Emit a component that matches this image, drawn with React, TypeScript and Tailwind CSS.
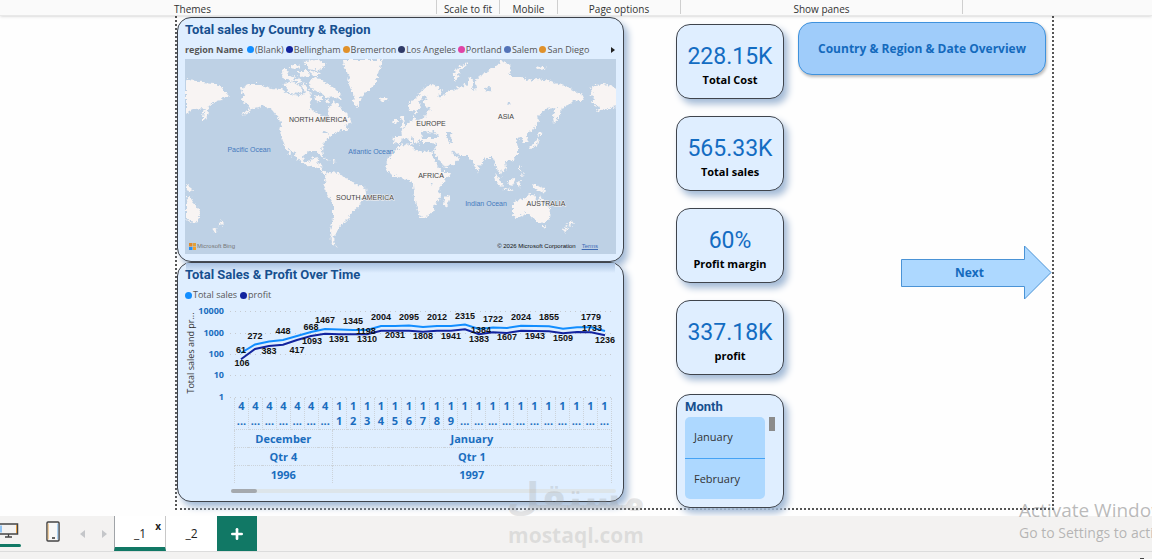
import { LuPlus } from "react-icons/lu";

const regions = [
  { name: "(Blank)", color: "#118dff" },
  { name: "Bellingham", color: "#12239e" },
  { name: "Bremerton", color: "#e0912b" },
  { name: "Los Angeles", color: "#2f3a68" },
  { name: "Portland", color: "#e044a7" },
  { name: "Salem", color: "#5373b8" },
  { name: "San Diego", color: "#e0912b" },
];

const kpis = [
  { value: "228.15K", label: "Total Cost" },
  { value: "565.33K", label: "Total sales" },
  { value: "60%", label: "Profit margin" },
  { value: "337.18K", label: "profit" },
];

const ticks = [
  { label: "10000", y: 311 },
  { label: "1000", y: 333 },
  { label: "100", y: 354 },
  { label: "10", y: 375 },
  { label: "1", y: 397 },
];

const salesLine = [
  353, 344.5, 341.5, 340, 336, 332, 329, 329.5, 330, 330, 326, 326, 325.5, 327,
  326, 326, 324.5, 329, 327.5, 328, 325.7, 326, 326.3, 328.7, 327.3, 327.3, 331,
];

const profitLine = [
  359.3, 349, 346, 344.7, 340, 336, 333.7, 334.3, 334.3, 334.3, 330.7, 330.7,
  330.7, 331.7, 330.7, 330.7, 329.3, 334.3, 332.3, 333, 330.7, 331, 331.3,
  333.3, 332, 332.3, 335.3,
];

// text, x, y (center)
const labels: [string, number, number][] = [
  ["61", 241, 350],
  ["106", 242, 363],
  ["272", 255, 336],
  ["383", 269, 351],
  ["448", 283, 331],
  ["417", 297, 350],
  ["668", 311, 327],
  ["1093", 312, 341],
  ["1467", 325, 320],
  ["1391", 339, 339],
  ["1345", 353, 321],
  ["1198", 366, 331],
  ["1310", 367, 339],
  ["2004", 381, 317],
  ["2031", 395, 335],
  ["2095", 409, 317],
  ["1808", 423, 336],
  ["2012", 437, 317],
  ["1941", 451, 336],
  ["2315", 465, 316],
  ["1384", 481, 330],
  ["1383", 479, 339],
  ["1722", 493, 319],
  ["1607", 507, 337],
  ["2024", 521, 317],
  ["1943", 535, 336],
  ["1855", 549, 317],
  ["1509", 563, 338],
  ["1779", 591, 317],
  ["1733", 592, 328],
  ["1236", 605, 340],
];

const days = Array.from({ length: 27 }, (_, i) => ({
  top: i < 7 ? "4" : "1",
  bottom: i >= 7 && i < 16 ? String(i - 6) : "...",
}));

const toPoints = (line: number[]) =>
  line.map((y, i) => `${241 + i * 14},${y}`).join(" ");

const land = [
  // north america
  "M240 87L248 83 257 83 270 87 280 88 285 92 297 95 303 92 310 97 308 107 317 113 323 115 325 120 328 115 327 108 333 100 340 107 347 114 350 121 344 125 347 129 339 129 333 132 325 138 322 145 321 150 323 157 319 153 316 151 307 151 302 155 304 161 308 161 312 157 318 156 316 162 320 164 321 170 329 172 323 173 317 167 308 165 299 160 292 151 287 147 291 157 285 149 281 140 279 130 281 121 275 114 270 108 262 105 253 107 246 112 240 115 248 107 245 103 240 100 243 95Z",
  // arctic islands
  "M280 71L286 68 288 74 295 76 292 80 282 78ZM283 82L292 80 300 86 301 93 288 92ZM297 70L307 70 308 75 299 76ZM302 60L317 59 325 63 318 70 308 68ZM311 77L320 78 327 83 334 88 339 93 341 99 333 96 327 97 320 91 311 89 308 83ZM303 81L306 85 304 90 301 85ZM314 94L321 96 321 101 315 100ZM310 70L320 72 319 75 311 75ZM290 63L299 65 296 68 289 67ZM295 78L300 79 299 83 295 82ZM304 88L310 91 309 96 303 95ZM324 98L329 99 327 103Z",
  // greenland, iceland
  "M342 59L343 67 348 75 347 83 352 92 353 103 357 106 360 97 367 90 375 82 378 72 381 59ZM378 98L381 96 387 96 386 99 381 101Z",
  // south america
  "M323 175L328 171 337 172 345 177 352 182 358 185 365 187 366 192 362 198 358 205 352 210 348 217 343 222 338 225 338 230 333 235 332 241 336 246 330 242 329 230 332 217 332 202 327 195 322 187 325 182Z",
  // siberia tip and kamchatka, wrapped to the left edge
  "M185 78L195 79 200 81 213 82 220 87 229 96 225 97 220 96 221 100 213 101 208 105 206 114 202 122 202 115 204 107 193 108 188 110 185 113Z",
  // europe and asia
  "M393 135L400 135 399 129 404 127 408 121 412 119 412 115 416 119 424 117 425 112 430 108 425 106 423 101 427 95 423 94 418 101 419 107 415 113 413 109 408 111 407 103 415 97 422 88 430 83 437 86 441 91 436 95 440 97 447 90 455 88 467 83 468 75 472 80 471 89 475 88 474 80 478 75 487 70 497 63 503 60 510 66 508 75 520 75 527 80 537 78 550 80 563 85 573 90 583 95 580 100 573 99 567 105 560 107 558 115 553 123 552 115 556 107 543 108 537 115 538 120 533 128 525 134 528 142 523 142 521 137 515 138 517 147 517 153 513 159 504 160 505 167 503 171 499 166 501 176 495 167 492 157 485 157 478 165 477 172 474 168 472 160 467 155 460 155 452 149 458 157 453 163 443 167 439 160 433 151 436 143 429 142 421 142 421 138 417 139 418 144 413 139 412 135 410 137 414 142 411 143 405 136 401 138 398 143 392 142Z",
  // british isles
  "M398 114L402 115 403 123 405 126 399 127 401 122ZM393 119L397 119 396 124 392 124Z",
  // africa
  "M398 145L410 143 412 148 422 151 430 150 432 155 437 165 442 171 450 171 448 175 438 187 439 195 435 203 432 210 425 216 419 217 417 210 413 197 412 183 407 178 400 177 392 175 384 167 387 157 393 151ZM447 194L449 196 445 206 442 204 443 198Z",
  // australia and new zealand
  "M512 203L515 200 525 197 528 193 535 195 533 199 538 200 539 193 542 200 549 208 548 217 543 222 537 221 533 217 525 213 515 217 512 213ZM541 225L545 225 543 228ZM571 219L573 222 570 225 567 224ZM568 225L563 232 562 229ZM185 200L188 194 192 201 199 209 198 217 194 222 189 221 185 218ZM221 219L223 222 220 225 217 224ZM218 226L213 232 212 229Z",
  // indonesia, new guinea, philippines
  "M493 172L497 176 502 184 500 186 495 180ZM501 186L512 189 510 190 502 188ZM507 180L512 177 514 180 512 184 508 183ZM516 181L520 180 518 187ZM531 183L537 185 543 188 545 192 538 190 533 187ZM185 184L190 187 194 191 188 190 185 189ZM518 164L520 166 520 171 518 168ZM521 172L523 174 520 175Z",
  // japan, novaya zemlya, smaller bits
  "M528 146L533 142 536 137 538 138 536 144 530 147ZM537 131L542 132 538 135ZM453 81L453 74 457 67 463 63 467 61 465 65 459 69 457 76ZM534 65L541 66 545 68 537 69ZM320 155L325 157 329 159 324 158ZM331 160L335 161 331 162Z",
  // alaska, wrapped to the right edge
  "M590 87L595 84 603 83 616 87 616 106 610 107 603 109 595 112 598 106 590 101 593 97 588 94 592 91Z",
];

const lakes = [
  "M420 131L426 129 429 133 432 130 437 134 436 137 421 137Z",
  "M446 131L451 131 449 135 452 141 448 142 446 136Z",
  "M433 153L437 160 442 167 441 169 435 161Z",
  "M451 150L457 154 458 156 453 154Z",
  "M320 131L324 130 327 133 323 133Z",
  "M507 100L509 102 506 104Z",
  "M484 87L489 85 490 90 485 92Z",
  "M428 181L431 181 430 184Z",
];

const mapLabels: [string, number, number, boolean][] = [
  ["NORTH AMERICA", 318, 122, false],
  ["SOUTH AMERICA", 365, 200, false],
  ["EUROPE", 431, 126, false],
  ["ASIA", 506, 119, false],
  ["AFRICA", 431, 178, false],
  ["AUSTRALIA", 546, 206, false],
  ["Pacific Ocean", 249, 152, true],
  ["Atlantic Ocean", 371, 154, true],
  ["Indian Ocean", 486, 206, true],
];

const cardClass =
  "bg-[#dfeeff] border border-[#3f444c] rounded-[14px] shadow-[4px_5px_7px_#a3bad6]";

function Ribbon() {
  return (
    <header className="relative z-10 h-4 shrink-0 flex bg-[#fafafa] border-b border-[#e8e8e8] shadow-sm text-[10px] leading-[14px] text-[#333] text-center whitespace-nowrap">
      <div className="w-[437px] h-[14px] pl-[174px] pt-[2px] text-left border-r border-[#cfcfcf]">
        Themes
      </div>
      <div className="w-[63px] h-[14px] pt-[2px] border-r border-[#cfcfcf]">
        Scale to fit
      </div>
      <div className="w-[58px] h-[14px] pt-[2px] border-r border-[#cfcfcf]">
        Mobile
      </div>
      <div className="w-[123px] h-[14px] pt-[2px] border-r border-[#cfcfcf]">
        Page options
      </div>
      <div className="w-[282px] h-[14px] pt-[2px] border-r border-[#cfcfcf]">
        Show panes
      </div>
    </header>
  );
}

function MapCard() {
  return (
    <section className={`${cardClass} px-[7px] pb-[7px]`}>
      <h2 className="h-[22px] leading-6 text-[13px] font-bold text-[#17508f] font-[Roboto]">
        Total sales by Country &amp; Region
      </h2>
      <div className="h-[19px] flex items-center text-[9px] text-[#555] whitespace-nowrap">
        <span className="font-bold mr-1">region Name</span>
        <ul className="flex gap-[2px]">
          {regions.map((region) => (
            <li key={region.name} className="flex items-center gap-px">
              <span
                className="size-[7px] rounded-full"
                style={{ backgroundColor: region.color }}
              />
              {region.name}
            </li>
          ))}
        </ul>
        <button aria-label="More" className="ml-auto">
          <svg viewBox="0 0 6 8" className="w-[6px] h-2">
            <path d="M1 1L5 4 1 7Z" fill="#222" />
          </svg>
        </button>
      </div>
      <div className="relative">
        <svg
          viewBox="185 59 431 195"
          className="block w-full bg-[#bed1e5] font-['Liberation_Sans']"
        >
          <defs>
            <filter id="coast" x="0" y="0" width="100%" height="100%">
              <feTurbulence baseFrequency="0.22" numOctaves="3" seed="4" />
              <feDisplacementMap
                in="SourceGraphic"
                scale="5"
                xChannelSelector="R"
                yChannelSelector="G"
              />
            </filter>
          </defs>
          <g filter="url(#coast)">
            <rect x="185" y="59" width="431" height="195" fill="#bed1e5" />
            {land.map((d) => (
              <path key={d} d={d} fill="#f8f4f3" />
            ))}
            {lakes.map((d) => (
              <path key={d} d={d} fill="#bed1e5" />
            ))}
          </g>
          {mapLabels.map(([text, x, y, ocean]) => (
            <text
              key={text}
              x={x}
              y={y}
              fontSize="7"
              textAnchor="middle"
              fill={ocean ? "#4579bd" : "#444"}
              stroke={ocean ? "none" : "#f8f4f3"}
              strokeWidth="1"
              paintOrder="stroke"
            >
              {text}
            </text>
          ))}
        </svg>
        <div className="absolute inset-x-0 bottom-[3px] flex items-center px-1 text-[6px] leading-[10px] text-[#333] font-['Liberation_Sans']">
          <svg viewBox="0 0 7 7" className="size-[7px] mr-px">
            <path d="M0 0h3.500v3.500H0z" fill="#e08a2c" />
            <path d="M4 0h3v3.500H4z" fill="#e0a13b" />
            <path d="M0 4h3.500v3H0z" fill="#2b8ff0" />
            <path d="M4 4h3v3H4z" fill="#f0a02c" />
          </svg>
          <span className="text-[#777]">Microsoft Bing</span>
          <span className="ml-auto text-[#111]">
            © 2026 Microsoft Corporation
          </span>
          <a href="#terms" className="ml-[6px] mr-[14px] underline text-[#3f6cb5]">
            Terms
          </a>
        </div>
      </div>
    </section>
  );
}

function TimeCard() {
  return (
    <section className={`${cardClass} px-[7px] pb-2 relative`}>
      <div className="absolute inset-x-2 top-0 h-[10px] bg-linear-to-b from-[#a9c2e2] to-transparent" />
      <h2 className="relative h-[22px] leading-6 text-[13px] font-bold text-[#17508f] font-[Roboto]">
        Total Sales &amp; Profit Over Time
      </h2>
      <ul className="h-5 flex items-center gap-[3px] text-[9px] text-[#555]">
        <li className="flex items-center gap-px">
          <span className="size-[7px] rounded-full bg-[#118dff]" />
          Total sales
        </li>
        <li className="flex items-center gap-px">
          <span className="size-[7px] rounded-full bg-[#12239e]" />
          profit
        </li>
      </ul>
      <svg
        viewBox="185 305 431 93"
        className="block w-full overflow-visible"
      >
        <text
          transform="translate(194 353) rotate(-90)"
          textAnchor="middle"
          fontSize="9"
          fill="#333"
        >
          Total sales and pr...
        </text>
        {ticks.map((tick) => (
          <g key={tick.label}>
            <line
              x1="230"
              x2="614"
              y1={tick.y + 0.5}
              y2={tick.y + 0.5}
              stroke="#c6cad0"
              strokeDasharray="1 4"
            />
            <text
              x="224"
              y={tick.y + 3}
              textAnchor="end"
              fontSize="9"
              fontWeight="700"
              fill="#1a6dbe"
            >
              {tick.label}
            </text>
          </g>
        ))}
        <polyline
          points={toPoints(salesLine)}
          fill="none"
          stroke="#118dff"
          strokeWidth="2"
        />
        <polyline
          points={toPoints(profitLine)}
          fill="none"
          stroke="#12239e"
          strokeWidth="2"
        />
        <g
          className="font-['Liberation_Sans']"
          fontSize="9"
          fontWeight="700"
          textAnchor="middle"
          fill="#111"
        >
          {labels.map(([text, x, y]) => (
            <text key={text} x={x} y={y + 3}>
              {text}
            </text>
          ))}
        </g>
      </svg>
      <div className="pl-[49px] pr-[4px]">
        <table className="w-full table-fixed border-collapse text-center text-[11px] leading-[15px] font-bold text-[#1a6dbe]">
          <tbody>
            <tr className="h-[31px]">
              {days.map((day, i) => (
                <td
                  key={i}
                  className="p-0 border-x border-b border-dotted border-[#ccd3da]"
                >
                  <div>{day.top}</div>
                  <div>{day.bottom}</div>
                </td>
              ))}
            </tr>
            {[
              ["December", "January"],
              ["Qtr 4", "Qtr 1"],
              ["1996", "1997"],
            ].map(([left, right]) => (
              <tr key={left} className="h-[18px]">
                <td
                  colSpan={7}
                  className="p-0 border-x border-t border-dotted border-[#ccd3da]"
                >
                  {left}
                </td>
                <td
                  colSpan={20}
                  className="p-0 border-x border-t border-dotted border-[#ccd3da]"
                >
                  {right}
                </td>
              </tr>
            ))}
          </tbody>
        </table>
      </div>
      <div className="mt-[6px] ml-[46px] h-1 rounded-full bg-[#dde5ea]">
        <div className="w-[26px] h-full rounded-full bg-[#a5a9ae]" />
      </div>
    </section>
  );
}

function Slicer() {
  return (
    <section className={`${cardClass} mt-auto h-[114px] px-2`}>
      <h2 className="h-[22px] leading-6 text-[13px] font-bold text-[#17508f] font-[Roboto]">
        Month
      </h2>
      <div className="flex gap-1">
        <div className="flex-1 flex flex-col rounded-[5px] overflow-hidden bg-[#add8ff] text-[11px] text-[#333]">
          <button className="h-[42px] pl-[9px] text-left border-b border-[#45a3f5]">
            January
          </button>
          <button className="h-10 pl-[9px] text-left">February</button>
        </div>
        <div className="w-[6px] h-[14px] bg-[#8b8b8b]" />
      </div>
    </section>
  );
}

function PageTabs() {
  return (
    <footer className="shrink-0 bg-[#f3f2f1]">
      <div className="h-9 flex border-b border-[#dcdcdc]">
        <button
          aria-label="Desktop layout"
          className="w-[21px] flex flex-col justify-between pt-[7px] pb-1"
        >
          <svg viewBox="0 0 19 15" className="w-[19px] h-[15px]">
            <path
              d="M-2 1h19.500v10H-2"
              fill="#f3f2f1"
              stroke="#444"
              strokeWidth="1.500"
            />
            <path d="M1 2.500v7" stroke="#6fb5f5" strokeWidth="1.500" />
            <path d="M16.500 2v8" stroke="#e09a3e" />
            <path d="M8.500 11v3M5 14h7" stroke="#444" strokeWidth="1.300" />
          </svg>
          <span className="w-full h-[3px] rounded-r-full bg-[#117865]" />
        </button>
        <button aria-label="Mobile layout" className="ml-[25px] pb-[5px]">
          <svg viewBox="0 0 14 21" className="w-[14px] h-[21px]">
            <rect
              x="1"
              y="1"
              width="12"
              height="19"
              rx="1"
              fill="#f8f8f8"
              stroke="#444"
              strokeWidth="1.500"
            />
            <path d="M2.200 2.500v16" stroke="#e8b878" />
            <path d="M11.800 2.500v16" stroke="#8cc0ee" />
            <path d="M6 17h3" stroke="#333" strokeWidth="1.500" />
          </svg>
        </button>
        <button aria-label="Previous page" className="ml-5">
          <svg viewBox="0 0 5 8" className="w-[5px] h-2">
            <path d="M5 0v8L0 4Z" fill="#c4c6c9" />
          </svg>
        </button>
        <button aria-label="Next page" className="ml-[17px] mr-[7px]">
          <svg viewBox="0 0 5 8" className="w-[5px] h-2">
            <path d="M0 0v8L5 4Z" fill="#c4c6c9" />
          </svg>
        </button>
        <button className="relative w-[52px] pt-1 bg-white border-l border-l-[#a0a4a8] border-r border-r-[#c8c8c8] border-b-4 border-b-[#117865] text-[12px] text-[#222]">
          _1
          <span className="absolute right-1 top-1 text-[10px] leading-3 font-bold">
            x
          </span>
        </button>
        <button className="w-[51px] bg-white text-[12px] text-[#222]">
          _2
        </button>
        <button
          aria-label="New page"
          className="w-10 flex items-center justify-center bg-[#117865] text-white"
        >
          <LuPlus size={16} strokeWidth={4} />
        </button>
      </div>
      <div className="h-[7px] flex justify-end items-end pr-2">
        <span className="w-1 h-px bg-[#444]" />
      </div>
    </footer>
  );
}

export default function App() {
  return (
    <div className="relative h-screen flex flex-col overflow-hidden bg-[#fefefe] font-['Open_Sans',sans-serif]">
      <Ribbon />
      <main className="flex-1 min-h-0 pl-[175px] pr-[98px] pb-[6px]">
        <div className="h-full flex border-2 border-t-0 border-dotted border-[#555]">
          <div className="flex-1 min-w-0 pt-px">
            <MapCard />
            <TimeCard />
          </div>
          <div className="w-[108px] ml-[52px] pt-2 flex flex-col gap-[17px]">
            {kpis.map((kpi) => (
              <div
                key={kpi.label}
                className={`${cardClass} h-[75px] flex flex-col items-center pt-[17px]`}
              >
                <p className="text-[23px] leading-[30px] text-[#136cc2] font-[Roboto]">
                  {kpi.value}
                </p>
                <p className="text-[11px] leading-4 font-bold text-black">
                  {kpi.label}
                </p>
              </div>
            ))}
            <Slicer />
          </div>
          <div className="w-[254px] ml-[14px] pt-[6px] flex flex-col">
            <button className="h-[53px] mr-[6px] rounded-[14px] border border-[#3f92dd] bg-[#9fccfa] shadow-[1px_2px_3px_#bbb] text-[12px] font-bold text-[#146abd]">
              Country &amp; Region &amp; Date Overview
            </button>
            <button className="relative mt-[170px] self-end w-[151px] h-[55px] pr-[14px] text-[12px] font-bold text-[#146abd]">
              <svg
                viewBox="0 0 151 55"
                className="absolute inset-0 size-full"
              >
                <path
                  d="M.5 14.500H123.500V1L150 27.500 123.500 54V41.500H.5Z"
                  fill="#add8ff"
                  stroke="#4a93d6"
                />
              </svg>
              <span className="relative">Next</span>
            </button>
          </div>
        </div>
      </main>
      <PageTabs />

      <div className="absolute left-[506px] bottom-3 w-[140px] flex flex-col items-center font-bold text-[#9a9a9a]/25 whitespace-nowrap pointer-events-none">
        <p
          dir="rtl"
          className="text-[38px] leading-[52px] font-['DejaVu_Sans',sans-serif]"
        >
          مستقل
        </p>
        <p className="text-[21px] leading-6">mostaql.com</p>
      </div>
      <div className="absolute left-[1019px] bottom-4 text-[#777]/50 whitespace-nowrap pointer-events-none">
        <p className="text-[19px] leading-[26px]">Activate Windows</p>
        <p className="text-[14px] leading-5">
          Go to Settings to activate Windows.
        </p>
      </div>
    </div>
  );
}
